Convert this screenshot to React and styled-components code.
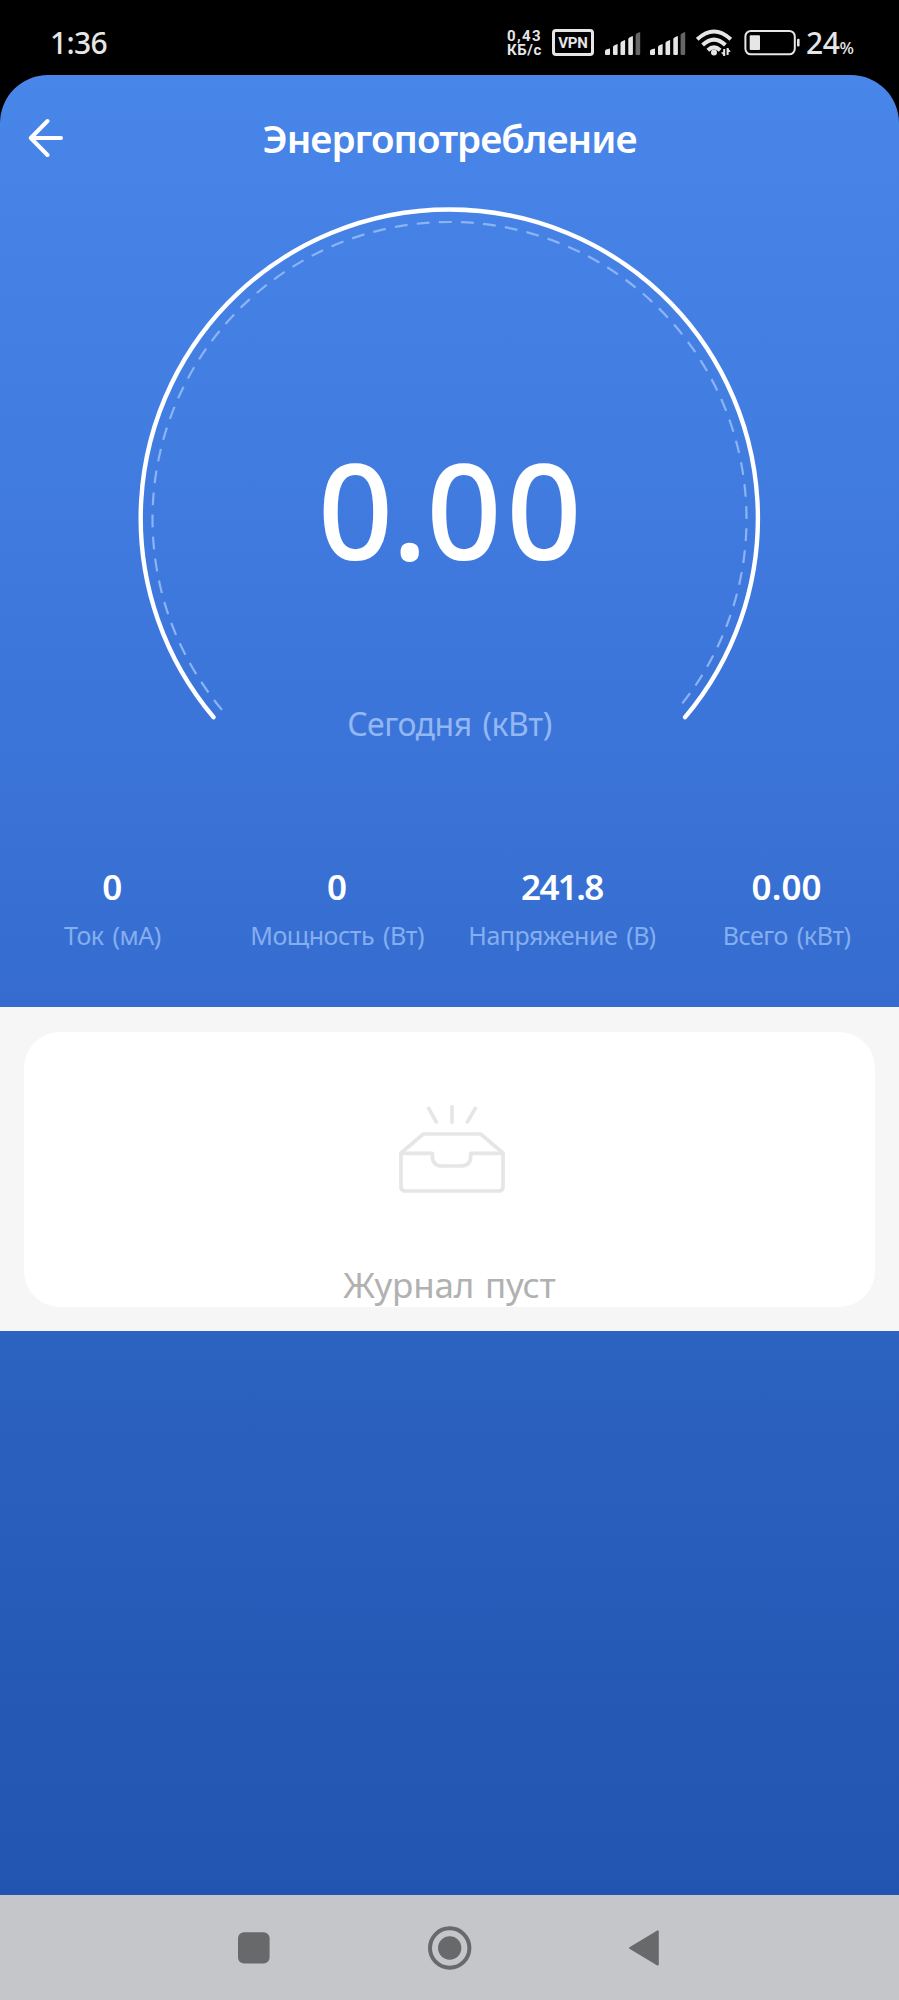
import React from 'react';
import styled, { createGlobalStyle } from 'styled-components';

const GlobalStyle = createGlobalStyle`
  * {
    box-sizing: border-box;
  }

  body {
    margin: 0;
    background: #000;
    font-family: 'Noto Sans', 'Open Sans', sans-serif;
  }
`;

const Phone = styled.div`
  display: flex;
  flex-direction: column;
  width: 899px;
  height: 2000px;
  background: #000;
  overflow: hidden;
`;

const StatusBar = styled.div`
  display: flex;
  align-items: center;
  height: 75px;
  padding: 10px 45px 0 50px;
  color: #e6e6e6;
`;

const Clock = styled.div`
  padding-top: 1px;
  font-size: 30px;
  font-weight: 500;
  line-height: 40px;
  letter-spacing: -0.7px;
`;

const StatusIcons = styled.div`
  display: flex;
  align-items: center;
  height: 27px;
  width: 347px;
  margin-left: auto;
`;

const NetSpeed = styled.div`
  width: 35px;
  font-family: Roboto, sans-serif;
  font-size: 15px;
  font-weight: 700;
  line-height: 14px;
  letter-spacing: 0.6px;
  white-space: nowrap;

  div:first-child {
    letter-spacing: 1.4px;
  }
`;

const VpnBadge = styled.div`
  display: flex;
  align-items: center;
  justify-content: center;
  width: 42px;
  height: 27px;
  margin-left: 10px;
  border: 3px solid #e6e6e6;
  border-radius: 4px;
  font-family: Roboto, sans-serif;
  font-size: 15px;
  font-weight: 700;
  line-height: 20px;
  letter-spacing: -0.2px;
`;

const StatusSvg = styled.svg`
  flex: none;
  display: block;
  margin-left: ${({ $gap }) => $gap}px;
`;

const BatteryLevel = styled.div`
  display: flex;
  align-items: baseline;
  margin-left: 6px;
  padding-top: 5px;
  font-size: 30px;
  font-weight: 500;
  line-height: 40px;
  letter-spacing: -0.4px;

  span {
    font-size: 17px;
  }
`;

const Screen = styled.div`
  display: flex;
  flex-direction: column;
  height: 1820px;
  border-radius: 48px 48px 0 0;
  background: linear-gradient(180deg, #4986e9 0%, #3c75d9 35%, #356bce 52%, #2c62c0 70%, #2254b1 100%);
  overflow: hidden;
`;

const Header = styled.header`
  display: grid;
  grid-template-columns: 100px 1fr 100px;
  align-items: center;
  height: 126px;
`;

const BackButton = styled.button`
  display: flex;
  padding: 0 0 0 28px;
  border: none;
  background: none;
`;

const Title = styled.h1`
  margin: 0;
  color: #fff;
  font-size: 38.5px;
  font-weight: 600;
  line-height: 50px;
  letter-spacing: -0.95px;
  text-align: center;
  white-space: nowrap;
`;

const Gauge = styled.div`
  display: grid;
  justify-items: center;
  height: 560px;
`;

const GaugeArc = styled.svg`
  grid-area: 1 / 1;
  display: block;
`;

const GaugeText = styled.div`
  grid-area: 1 / 1;
  display: flex;
  flex-direction: column;
  align-items: center;
`;

const GaugeValue = styled.div`
  margin-top: 218px;
  padding-left: 5px;
  color: #fff;
  font-size: 132px;
  font-weight: 500;
  line-height: 180px;
  letter-spacing: 4.5px;

  span {
    letter-spacing: -1.5px;
  }
`;

const GaugeLabel = styled.div`
  margin-top: 103px;
  color: #92b7f3;
  font-size: 32px;
  line-height: 44px;
  letter-spacing: -0.5px;
  word-spacing: 3px;
`;

const Stats = styled.div`
  display: grid;
  grid-template-columns: repeat(4, 1fr);
  height: 246px;
  padding-top: 101px;
`;

const Stat = styled.div`
  display: flex;
  flex-direction: column;
  align-items: center;
  white-space: nowrap;
`;

const StatValue = styled.div`
  color: #fff;
  font-size: 35px;
  font-weight: 600;
  line-height: 50px;
  letter-spacing: ${({ $tight }) => ($tight ? '-1.6px' : '0.1px')};
`;

const StatLabel = styled.div`
  color: #85aef0;
  font-size: 25px;
  line-height: 46px;
  letter-spacing: -0.5px;
  word-spacing: 3px;
`;

const LogPanel = styled.section`
  height: 324px;
  padding: 25px 24px 24px;
  background: #f6f6f6;
`;

const LogCard = styled.div`
  display: flex;
  flex-direction: column;
  align-items: center;
  height: 275px;
  padding-top: 72px;
  border-radius: 36px;
  background: #fff;
  overflow: hidden;
`;

const TrayIcon = styled.svg`
  flex: none;
  margin-left: 5px;
`;

const EmptyText = styled.div`
  flex: none;
  margin-top: 67px;
  color: #b1b1b1;
  font-size: 35px;
  line-height: 48px;
  letter-spacing: -0.2px;
  word-spacing: 2px;
`;

const NavBar = styled.nav`
  display: flex;
  align-items: center;
  height: 105px;
  padding-left: 236px;
  background: #c5c6ca;
`;

const NavIcon = styled.svg`
  flex: none;
  margin-left: ${({ $gap }) => $gap || 0}px;
  color: #68696b;
`;

const stats = [
  { label: 'Ток (мА)', value: '0' },
  { label: 'Мощность (Вт)', value: '0' },
  { label: 'Напряжение (В)', value: '241.8', tight: true },
  { label: 'Всего (кВт)', value: '0.00' },
];

const Signal = ({ gap }) => (
  <StatusSvg $gap={gap} width="36" height="27" viewBox="0 0 36 27" fill="#e6e6e6">
    <path d="M0 22 Q0 20.4 5 19.6 V25 Q5 26 4 26 H1 Q0 26 0 25Z" />
    <path d="M8 18 Q8 16.5 12.6 15 V25 Q12.6 26 11.6 26 H9 Q8 26 8 25Z" />
    <path d="M15.5 14 Q15.5 12.5 20.1 11 V25 Q20.1 26 19.1 26 H16.5 Q15.5 26 15.5 25Z" />
    <path d="M23.3 10 Q23.3 8.5 27.9 7 V25 Q27.9 26 26.9 26 H24.3 Q23.3 26 23.3 25Z" />
    <path d="M30.6 6 Q30.6 4.5 35.2 3 V25 Q35.2 26 34.2 26 H31.6 Q30.6 26 30.6 25Z" fill="#666" />
  </StatusSvg>
);

const Wifi = () => (
  <StatusSvg $gap={10} width="36" height="27" viewBox="0 0 36 27" fill="none" stroke="#e6e6e6">
    <path d="M1.2 10.4 Q18 -5.4 34.8 10.4" strokeWidth="4" />
    <path d="M6.6 16 Q18 5.2 29.4 16" strokeWidth="4" />
    <path d="M11.8 21.2 Q18 15.6 24.2 21.2" strokeWidth="4" />
    <circle cx="18" cy="23.5" r="3" fill="#e6e6e6" stroke="none" />
    <path d="M28.2 20 V27 M31.6 19 V26" strokeWidth="2" />
    <path d="M25 23.6 L28.2 27 V23Z M34.8 22.6 L31.6 19 V23.4Z" fill="#e6e6e6" stroke="none" />
  </StatusSvg>
);

const Battery = () => (
  <StatusSvg $gap={12} width="56" height="27" viewBox="0 0 56 27" fill="#e6e6e6">
    <rect x="1.4" y="1.9" width="49.4" height="23.4" rx="5.5" fill="none" stroke="#e6e6e6" strokeWidth="2" />
    <rect x="5.7" y="6.2" width="10.3" height="14.8" rx="1" />
    <rect x="53" y="9.8" width="2.6" height="7.6" rx="1" />
  </StatusSvg>
);

const EmptyTray = () => (
  <TrayIcon
    width="108"
    height="90"
    viewBox="204 72 324 270"
    fill="none"
    stroke="#e6e6e6"
    strokeWidth="11"
    strokeLinecap="round"
    strokeLinejoin="round"
  >
    <path d="M296 85 L319 126 M366 80 V127 M436 85 L412 126" />
    <path d="M213 219 L280 162 H452 L519 219" />
    <path d="M213 220 H307 V228 Q307 258 337 258 H392 Q422 258 422 228 V220 H519 V321 Q519 333 507 333 H225 Q213 333 213 321Z" />
  </TrayIcon>
);

const App = () => {
  return (
    <>
      <GlobalStyle />
      <Phone>
        <StatusBar>
          <Clock>1:36</Clock>
          <StatusIcons>
            <NetSpeed>
              <div>0,43</div>
              <div>КБ/с</div>
            </NetSpeed>
            <VpnBadge>VPN</VpnBadge>
            <Signal gap={11} />
            <Signal gap={9} />
            <Wifi />
            <Battery />
            <BatteryLevel>
              24<span>%</span>
            </BatteryLevel>
          </StatusIcons>
        </StatusBar>

        <Screen>
          <Header>
            <BackButton aria-label="Назад">
              <svg width="36" height="40" viewBox="0 0 36 40" fill="none" stroke="#fff" strokeWidth="4" strokeLinecap="round" strokeLinejoin="round">
                <path d="M19.5 3 L2.8 20 L19.5 37 M2.8 20 H33" />
              </svg>
            </BackButton>
            <Title>Энергопотребление</Title>
          </Header>

          <Gauge>
            <GaugeArc width="640" height="540" viewBox="-319.5 -318 640 540" fill="none">
              <path d="M-236 198.2 A308.6 308.6 0 1 1 235.6 198.2" stroke="#fff" strokeWidth="4.4" strokeLinecap="round" />
              <path d="M-227.5 190.9 A297 297 0 1 1 230.8 186.9" stroke="#8ab4f4" strokeWidth="2.2" strokeDasharray="12.8 9.3" />
            </GaugeArc>
            <GaugeText>
              <GaugeValue>
                <span>0.</span>00
              </GaugeValue>
              <GaugeLabel>Сегодня (кВт)</GaugeLabel>
            </GaugeText>
          </Gauge>

          <Stats>
            {stats.map((stat) => (
              <Stat key={stat.label}>
                <StatValue $tight={stat.tight}>{stat.value}</StatValue>
                <StatLabel>{stat.label}</StatLabel>
              </Stat>
            ))}
          </Stats>

          <LogPanel>
            <LogCard>
              <EmptyTray />
              <EmptyText>Журнал пуст</EmptyText>
            </LogCard>
          </LogPanel>
        </Screen>

        <NavBar>
          <NavIcon width="36" height="44" viewBox="0 0 36 44" fill="currentColor">
            <rect x="2" y="6.3" width="31.6" height="31.2" rx="6" />
          </NavIcon>
          <NavIcon $gap={156} width="44" height="44" viewBox="0 0 44 44">
            <circle cx="21.7" cy="22" r="19.7" fill="none" stroke="currentColor" strokeWidth="4" />
            <circle cx="21.7" cy="22" r="11.7" fill="currentColor" />
          </NavIcon>
          <NavIcon $gap={156} width="34" height="44" viewBox="0 0 34 44" fill="currentColor" stroke="currentColor" strokeWidth="2" strokeLinejoin="round">
            <path d="M2 22 L29.8 5.4 V38.6Z" />
          </NavIcon>
        </NavBar>
      </Phone>
    </>
  );
};

export default App;
